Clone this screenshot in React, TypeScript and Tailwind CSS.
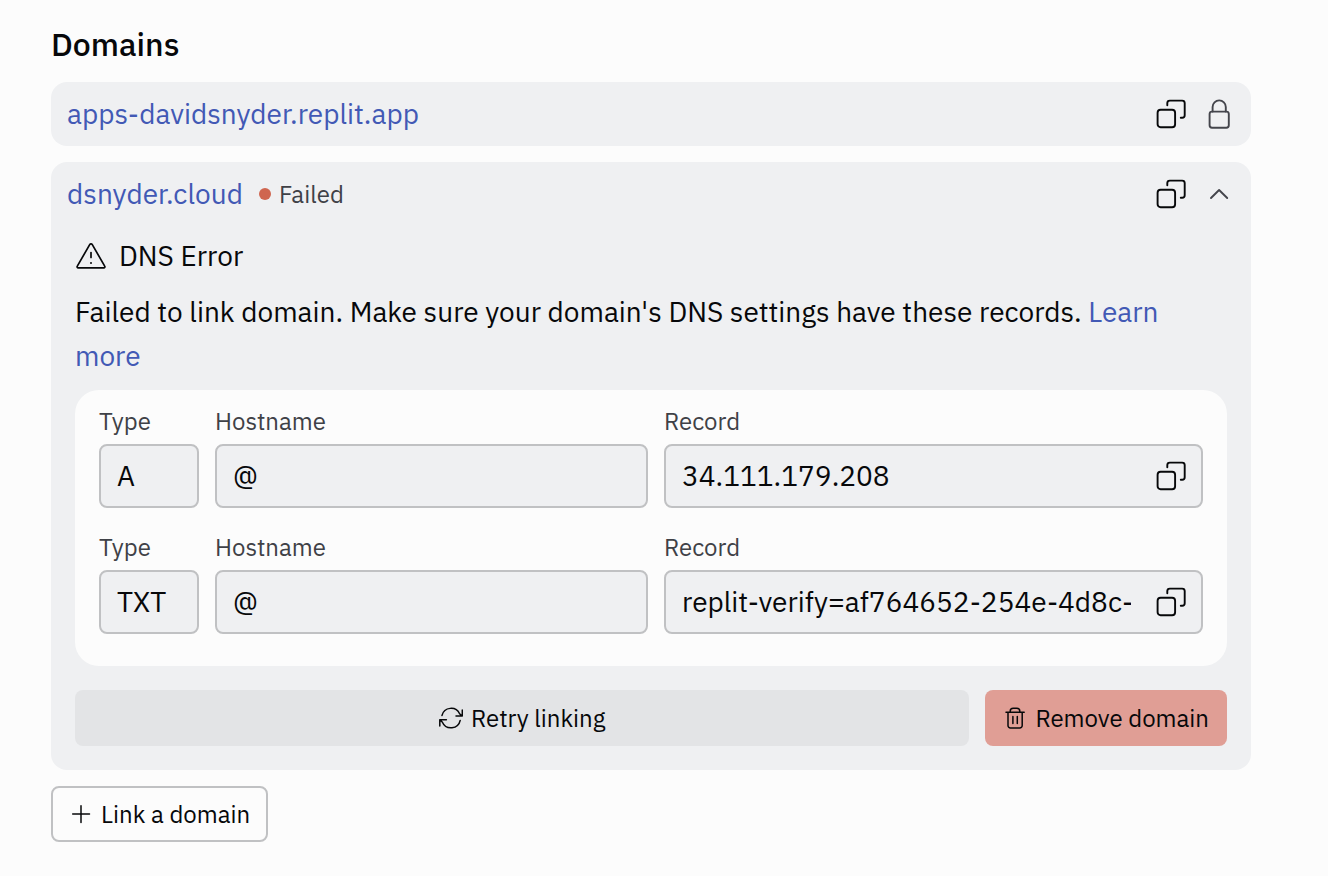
import { useId } from "react";
import type { ReactNode } from "react";

type IconProps = { children: ReactNode; small?: boolean };

function Icon({ children, small }: IconProps) {
  return (
    <svg
      aria-hidden="true"
      viewBox={small ? "0 0 24 24" : "0 0 32 32"}
      className={small ? "size-6 shrink-0" : "size-8 shrink-0"}
      fill="none"
      stroke="currentColor"
      strokeWidth={small ? 1.5 : 1.9}
      strokeLinecap="round"
      strokeLinejoin="round"
    >
      {children}
    </svg>
  );
}

function CopyButton({ label }: { label: string }) {
  return (
    <button type="button" aria-label={label} className="shrink-0 text-[#07080a]">
      <Icon>
        <rect x="2.6" y="11.7" width="17.5" height="17.6" rx="3" />
        <path d="M12.3 7.2V5.1a2.5 2.5 0 0 1 2.5-2.5h12.4a2.5 2.5 0 0 1 2.5 2.5v12.2a2.5 2.5 0 0 1-2.5 2.5h-1.4" />
      </Icon>
    </button>
  );
}

type FieldProps = { label: string; value: string; copyable?: boolean };

function Field({ label, value, copyable }: FieldProps) {
  const id = useId();
  return (
    <div className="flex min-w-0 flex-col gap-2">
      <label htmlFor={id} className="text-2xl leading-[30px] text-[#3f4147]">
        {label}
      </label>
      <div className="flex h-16 items-center gap-6 rounded-lg border-2 border-[#c0c1c3] bg-[#eff0f2] pr-3.5 pl-4">
        <input
          id={id}
          readOnly
          value={value}
          className="w-full min-w-0 flex-1 bg-transparent text-[28px] leading-9 outline-none"
        />
        {copyable && <CopyButton label={`Copy ${label.toLowerCase()}`} />}
      </div>
    </div>
  );
}

const records = [
  { type: "A", hostname: "@", record: "34.111.179.208" },
  { type: "TXT", hostname: "@", record: "replit-verify=af764652-254e-4d8c-" },
];

export default function App() {
  return (
    <main className="min-h-screen bg-[#fcfcfc] pt-6 pr-[77px] pb-8 pl-[51px] font-['IBM_Plex_Sans',Roboto,sans-serif] text-[#07080a]">
      <h1 className="mb-[18px] text-[32px] leading-10 font-medium">Domains</h1>

      <div className="flex flex-col items-start gap-4">
        <section className="flex h-16 w-full items-center gap-4 rounded-2xl bg-[#eff0f2] px-4">
          <a href="#app" className="text-[28px] leading-9 text-[#4259b5]">
            apps-davidsnyder.replit.app
          </a>
          <div className="ml-auto flex gap-4">
            <CopyButton label="Copy apps-davidsnyder.replit.app" />
            <span className="text-[#44454c]">
              <Icon>
                <rect x="6.6" y="13.6" width="19.2" height="16.1" rx="2.4" />
                <path d="M9.6 13.6V9a6.6 6.6 0 0 1 13.2 0v4.6" />
              </Icon>
            </span>
          </div>
        </section>

        <section className="w-full rounded-2xl bg-[#eff0f2] pb-6">
          <div className="flex h-16 items-center gap-4 px-4">
            <a href="#cloud" className="text-[28px] leading-9 text-[#4259b5]">
              dsnyder.cloud
            </a>
            <span className="flex items-center gap-2 text-2xl leading-[31px] text-[#3f4147]">
              <span className="size-3 rounded-full bg-[#cf6650]" />
              Failed
            </span>
            <div className="ml-auto flex gap-4">
              <CopyButton label="Copy dsnyder.cloud" />
              <button type="button" aria-label="Collapse" className="text-[#44454c]">
                <Icon>
                  <path d="M8 20l8.1-8 8.1 8" />
                </Icon>
              </button>
            </div>
          </div>

          <div className="flex flex-col gap-3 px-6 pt-2">
            <h2 className="flex items-center gap-3 text-[28px] leading-[44px]">
              <Icon>
                <path
                  strokeWidth="1.7"
                  d="M14.7 4.6a1.5 1.5 0 0 1 2.6 0L29.7 26.2a1 1 0 0 1-.9 1.6H3.2a1 1 0 0 1-.9-1.6Z"
                />
                <path strokeWidth="1.7" d="M16 12.5v5" />
                <circle cx="16" cy="22.9" r="1" fill="currentColor" stroke="none" />
              </Icon>
              DNS Error
            </h2>
            <p className="text-[28px] leading-[44px]">
              Failed to link domain. Make sure your domain's DNS settings have these records.{" "}
              <a href="#learn" className="text-[#4259b5]">
                Learn more
              </a>
            </p>

            <div className="flex flex-col gap-6 rounded-3xl bg-[#fcfcfc] px-6 pt-4 pb-8">
              {records.map((r) => (
                <div key={r.type} className="grid grid-cols-[100px_433fr_539fr] gap-4">
                  <Field label="Type" value={r.type} />
                  <Field label="Hostname" value={r.hostname} />
                  <Field label="Record" value={r.record} copyable />
                </div>
              ))}
            </div>

            <div className="flex gap-4 pt-3 text-2xl leading-[31px]">
              <button
                type="button"
                className="flex h-14 flex-1 items-center justify-center gap-2 rounded-lg bg-[#e3e4e6]"
              >
                <Icon small>
                  <path d="M3 9.4A9.4 9.4 0 0 1 20.6 7.7L23 9.9M23.3 4v6H17M21.2 14.4A9.4 9.4 0 0 1 3.4 16.2L1 13.8M.8 20v-6.2h6.6" />
                </Icon>
                Retry linking
              </button>
              <button
                type="button"
                className="flex h-14 items-center gap-2 rounded-lg bg-[#e09e95] px-[18px]"
              >
                <Icon small>
                  <path d="M3 6.2h18.2M7.2 6V5.2a3 3 0 0 1 3-3h3.6a3 3 0 0 1 3 3V6M5 6.2v13.3a2.4 2.4 0 0 0 2.4 2.4h9.4a2.4 2.4 0 0 0 2.4-2.4V6.2M9.9 10.6v7M14.3 10.6v7" />
                </Icon>
                Remove domain
              </button>
            </div>
          </div>
        </section>

        <button
          type="button"
          className="flex h-14 items-center gap-2 rounded-lg border-2 border-[#c0c1c3] px-4 text-2xl leading-[31px]"
        >
          <Icon small>
            <path d="M3.7 12h16.8M12 3.8v16.6" />
          </Icon>
          Link a domain
        </button>
      </div>
    </main>
  );
}
